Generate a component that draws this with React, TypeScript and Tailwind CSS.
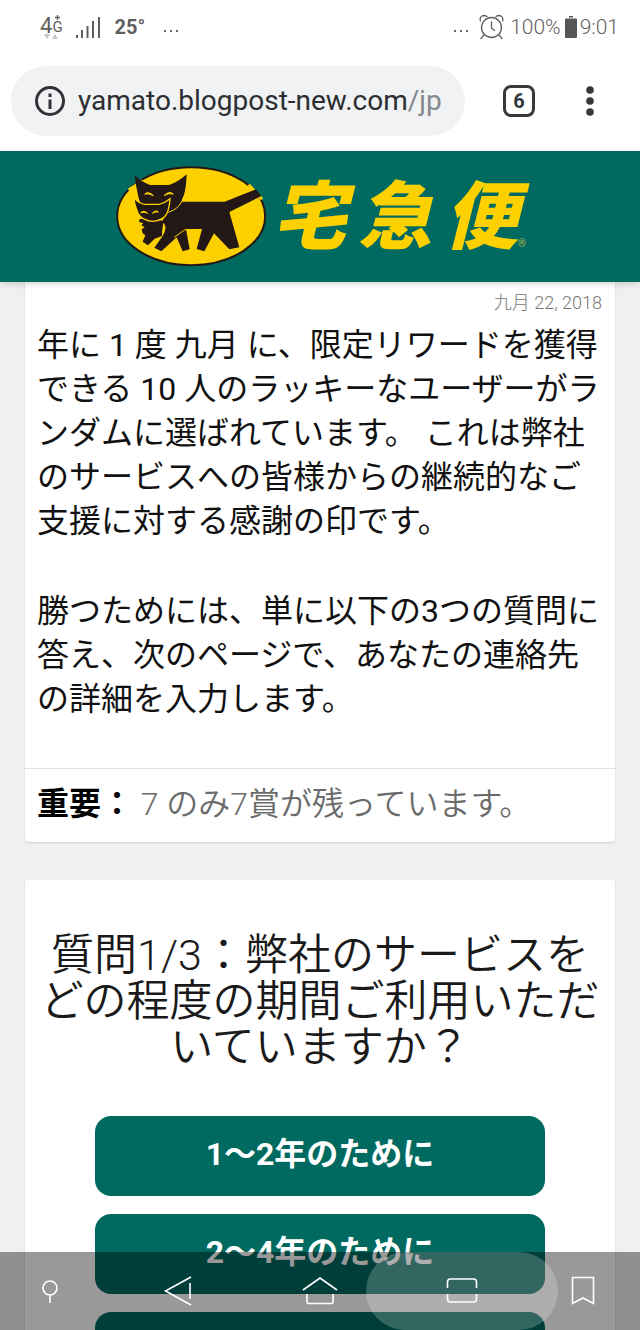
import { useState } from 'react'

const ANSWERS = ['1〜2年のために', '2〜4年のために']

export default function App() {
  const [answer, setAnswer] = useState<string | null>(null)

  return (
    <div className="h-screen flex flex-col overflow-hidden bg-[#f0f0f0] font-['Roboto','Noto_Sans_CJK_JP',sans-serif]" lang="ja">
      <header className="flex-none bg-white">
        <StatusBar />
        <AddressBar />
      </header>

      <div className="relative z-10 flex-none h-[131px] bg-[#006a60] shadow-md flex items-start justify-center pt-[13px] gap-1">
        <CatLogo />
        <div className="flex items-end">
          <div className="flex gap-3 text-[74px] leading-[108px] font-black italic text-[#fdd000]">
            <span>宅</span>
            <span>急</span>
            <span>便</span>
          </div>
          <span className="text-[10px] leading-4 pb-5 text-[#b5b84a]">®</span>
        </div>
      </div>

      <main className="flex-1 min-h-0 overflow-hidden px-[25px]">
        <section className="bg-white rounded-b shadow">
          <p className="pt-[9px] pr-[13px] text-right text-[18px] leading-6 font-light text-[#777777]">九月 22, 2018</p>
          <div className="px-3 pt-2 pb-[47px] text-[32px] leading-[44px] text-[#111111]">
            <p>
              年に 1 度 九月 に、限定リワードを獲得できる 10 人のラッキーなユーザーがランダムに選ばれています。 これは弊社のサービスへの皆様からの継続的なご支援に対する感謝の印です。
            </p>
            <p className="mt-[46px]">
              勝つためには、単に以下の3つの質問に答え、次のページで、あなたの連絡先の詳細を入力します。
            </p>
          </div>
          <p className="border-t border-[#e2e2e2] px-3 pt-[13px] pb-4 text-[32px] leading-[44px] font-[350] text-[#6a6a6a]">
            <strong className="font-bold text-black">重要：</strong> 7 のみ7賞が残っています。
          </p>
        </section>

        <section className="mt-[38px] bg-white rounded shadow pt-[52px] pb-8">
          <h1 className="px-3 text-center text-[43px] leading-[46px] font-[350] text-[#1a1a1a]">
            質問1/3：弊社のサービスをどの程度の期間ご利用いただいていますか？
          </h1>
          <div className="mt-[46px] px-[70px] flex flex-col gap-[18px]">
            {ANSWERS.map((a) => (
              <button
                key={a}
                onClick={() => setAnswer(a)}
                aria-pressed={answer === a}
                className="h-20 pb-1 rounded-2xl bg-[#006a60] text-white text-[32px] leading-[44px] font-bold"
              >
                {a}
              </button>
            ))}
            <button aria-label="Next answer" className="h-20 rounded-2xl bg-[#006a60]" />
          </div>
        </section>
      </main>

      <NavBar />
    </div>
  )
}

function StatusBar() {
  return (
    <div className="h-[66px] pb-[13px] pl-10 pr-[21px] flex items-center justify-between text-[21px] leading-6 font-light text-[#5f5f5f]">
      <div className="flex items-center">
        <div className="relative flex">
          <span className="text-[22px] font-normal">4</span>
          <span className="text-[15px] pt-px font-normal">G</span>
          <svg className="absolute left-0 top-0 w-6 h-8" viewBox="0 0 24 32" fill="none">
            <path d="M17.500 1v5M15 3.500h5" stroke="#5f5f5f" strokeWidth="1.300" />
            <path d="M4 20h6l-3 5zM12 25h6l-3-5z" fill="#c4c4c4" />
          </svg>
        </div>
        <svg className="ml-[12px] w-[26px] h-6" viewBox="0 0 26 24" stroke="#5f5f5f" strokeWidth="2">
          <path d="M2 23v-3M7 23v-8M12.500 23V11M18 23V6M24 23V2" />
        </svg>
        <span className="ml-[14px] font-bold text-[20px]">25°</span>
        <Ellipsis className="ml-[18px]" />
      </div>
      <div className="flex items-center">
        <Ellipsis className="mr-[10px]" />
        <svg className="mr-[6px] w-[25px] h-[26px]" viewBox="0 0 25 26" fill="none" stroke="#5f5f5f" strokeWidth="1.300" strokeLinecap="round">
          <circle cx="12.500" cy="13.500" r="10" />
          <path d="M12.500 8v6l3 2.500M5 21l-3 3.500M20 21l3 3.500M1.500 7C0 3 4 0 8 2.500M23.500 7C25 3 21 0 17 2.500" />
        </svg>
        <span>100%</span>
        <svg className="ml-1 mr-[3px] w-3 h-[22px]" viewBox="0 0 12 22" fill="#555555">
          <path d="M4 0h4v1.500H4zM1 2.500h10a1 1 0 0 1 1 1V21a1 1 0 0 1-1 1H1a1 1 0 0 1-1-1V3.500a1 1 0 0 1 1-1z" />
        </svg>
        <span>9:01</span>
      </div>
    </div>
  )
}

function Ellipsis({ className }: { className: string }) {
  return (
    <svg className={`${className} mt-2 w-4 h-3`} viewBox="0 0 16 12" fill="#666666">
      <path d="M1 5h2v2H1zM7 5h2v2H7zM13 5h2v2h-2z" />
    </svg>
  )
}

function AddressBar() {
  return (
    <div className="pl-[11px] pr-[33px] pb-[15px] flex items-center">
      <label className="flex-1 min-w-0 h-[70px] rounded-full bg-[#f0f2f4] pl-[23px] flex items-center text-[28px] leading-8">
        <svg className="flex-none w-8 h-8 mr-3" viewBox="0 0 32 32" fill="none" stroke="#303236" strokeWidth="3">
          <circle cx="16" cy="16" r="13.500" />
          <path d="M16 14.500V24M16 8.500v3.500" />
        </svg>
        <input
          aria-label="Address"
          className="field-sizing-content bg-transparent outline-none text-[#2c2e31]"
          defaultValue="yamato.blogpost-new.com"
        />
        <span className="text-[#85888c]">/jp</span>
      </label>
      <button aria-label="Tabs" className="w-[108px] flex justify-center">
        <span className="w-8 h-8 rounded-lg border-3 border-[#36393b] flex items-center justify-center text-[20px] leading-5 font-bold text-[#36393b]">
          6
        </span>
      </button>
      <button aria-label="Menu" className="w-[34px] flex justify-center">
        <svg className="w-2 h-8" viewBox="0 0 8 32" fill="#36393b">
          <circle cx="4" cy="5" r="3.800" />
          <circle cx="4" cy="16" r="3.800" />
          <circle cx="4" cy="27" r="3.800" />
        </svg>
      </button>
    </div>
  )
}

function CatLogo() {
  return (
    <svg className="w-[154px] h-[104px]" viewBox="42 42 462 312" role="img" aria-label="Yamato">
      <ellipse cx="273.500" cy="198.500" rx="222" ry="147" fill="#fdd000" stroke="#231815" strokeWidth="6" />
      {/* the ring breaks behind the ears and the tail */}
      <path d="M86 120L128 92M446 104L486 148" stroke="#fdd000" strokeWidth="9" />
      <g fill="#231815">
        <path d="M200 186L242 155H374L468 118L484 138L388 186L418 292L388 298L342 250L313 304L290 297L306 237H258L269 298L248 304L230 262L184 304L163 293L188 258Q204 230 186 216Z" />
        <path d="M118 208L133 205L190 212L186 258L164 266L144 286L128 275L136 256L128 250L125 238L134 232L124 226L130 219L118 217Z" />
      </g>
      <path d="M104 76Q128 98 150 105H207Q232 98 260 73Q259 112 251 138Q242 172 205 186H130Q112 145 104 76Z" fill="#231815" />
      <path d="M252 138Q242 176 205 187" fill="none" stroke="#fdd000" strokeWidth="3" />
      <path d="M101 143Q116 160 133 163H177Q196 158 210 146Q208 174 201 190Q190 212 157 214Q125 211 114 190Q104 168 101 143Z" fill="#231815" stroke="#fdd000" strokeWidth="4" />
      <path d="M134 132Q146 122 160 137Q146 129 134 132ZM192 137Q206 121 220 132Q206 128 192 137ZM122 188Q132 179 143 190Q132 184 122 188ZM157 190Q168 178 175 186Q166 184 157 190Z" fill="#fdd000" stroke="#fdd000" strokeWidth="3" />
      <path d="M190 220Q206 232 186 255Z" fill="#fdd000" />
      <path d="M222 262L258 237" stroke="#fdd000" strokeWidth="3" />
    </svg>
  )
}

function NavBar() {
  const icon = 'w-9 h-8'
  return (
    <nav className="fixed inset-x-0 bottom-0 z-20 h-[78px] pl-[18px] pr-8 flex bg-black/40 text-white">
      <button aria-label="Pin" className="flex-[64] flex items-center justify-center">
        <svg className={icon} viewBox="0 0 36 32" fill="none" stroke="currentColor" strokeWidth="1.600">
          <circle cx="18" cy="13" r="7" />
          <path d="M18 20v8" />
        </svg>
      </button>
      <button aria-label="Back" className="flex-[192] flex items-center justify-center">
        <svg className={icon} viewBox="0 0 36 32" fill="none" stroke="currentColor" strokeWidth="1.600">
          <path d="M31 2L5.500 16L31 30M30 8v16" />
        </svg>
      </button>
      <button aria-label="Home" className="flex-[92] flex items-center justify-center">
        <svg className={icon} viewBox="0 0 36 32" fill="none" stroke="currentColor" strokeWidth="1.600">
          <path d="M1 15L18 3L35 15M5 19v8a1.500 1.500 0 0 0 1.500 1.500h23a1.500 1.500 0 0 0 1.500-1.500v-8" />
        </svg>
      </button>
      <button aria-label="Recent apps" className="flex-[192] rounded-full bg-white/20 flex items-center justify-center">
        <svg className={icon} viewBox="0 0 36 32" fill="none" stroke="currentColor" strokeWidth="1.600">
          <path d="M3.500 13V7a3 3 0 0 1 3-3h23a3 3 0 0 1 3 3v6M3.500 19v5a3 3 0 0 0 3 3h23a3 3 0 0 0 3-3v-5" />
        </svg>
      </button>
      <button aria-label="Bookmark" className="flex-[50] flex items-center justify-center">
        <svg className={icon} viewBox="0 0 36 32" fill="none" stroke="currentColor" strokeWidth="1.600">
          <path d="M7.500 2.500h21v26L18 23L7.500 28.500z" />
        </svg>
      </button>
    </nav>
  )
}
